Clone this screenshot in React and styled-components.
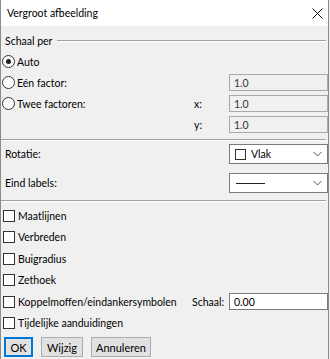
import styled, { createGlobalStyle } from "styled-components";

const GlobalStyle = createGlobalStyle`
  html, body {
    margin: 0;
    padding: 0;
    background: #f0f0f0;
  }
  body {
    font-family: Lato, "Liberation Sans", sans-serif;
    font-size: 10.5px;
    color: #000;
  }
`;

const Window = styled.div`
  width: 329px;
  height: 359px;
  box-sizing: border-box;
  border-left: 1px solid #8c8c8c;
  border-right: 1px solid #8c8c8c;
  background: #f0f0f0;
  display: flex;
  flex-direction: column;
  overflow: hidden;
`;

const TitleBar = styled.div`
  height: 26px;
  flex: 0 0 26px;
  background: #fff;
  display: flex;
  align-items: center;
  justify-content: space-between;
  padding: 0 5px 0 6px;
`;

const Title = styled.span`
  color: #000;
`;

const CloseIcon = styled.svg`
  width: 11px;
  height: 11px;
  display: block;
`;

const Body = styled.div`
  display: flex;
  flex-direction: column;
  padding: 4px 0 0 0;
`;

const GroupHeader = styled.div`
  height: 21px;
  display: flex;
  align-items: center;
  padding-left: 4px;
`;

const GroupLine = styled.div`
  flex: 1;
  margin: 0 2px 0 5px;
  border-top: 1px solid #a0a0a0;
  border-bottom: 1px solid #fff;
`;

const Row = styled.div`
  height: ${(p) => p.$h || 21}px;
  display: flex;
  align-items: center;
  margin-top: ${(p) => p.$mt || 0}px;
`;

const Label = styled.span`
  flex: 1;
  padding-left: ${(p) => p.$pl || 0}px;
  white-space: nowrap;
`;

const Suffix = styled.span`
  width: ${(p) => p.$w || 35}px;
  white-space: nowrap;
`;

const Radio = styled.span`
  width: 11px;
  height: 11px;
  border: 1px solid #333;
  border-radius: 50%;
  background: #fff;
  margin: 0 2px 0 1px;
  display: flex;
  align-items: center;
  justify-content: center;
  flex: 0 0 auto;
  &::after {
    content: "";
    width: 5px;
    height: 5px;
    border-radius: 50%;
    background: ${(p) => (p.$checked ? "#222" : "transparent")};
  }
`;

const Check = styled.span`
  width: 10px;
  height: 10px;
  border: 1px solid #333;
  background: #fff;
  margin: 0 3px 0 2px;
  flex: 0 0 auto;
`;

const Field = styled.div`
  width: 99px;
  height: 17px;
  box-sizing: border-box;
  border: 1px solid ${(p) => (p.$disabled ? "#a9a9a9" : "#7a7a7a")};
  background: ${(p) => (p.$disabled ? "#f0f0f0" : "#fff")};
  color: ${(p) => (p.$disabled ? "#333" : "#000")};
  display: flex;
  align-items: center;
  padding-left: 4px;
  flex: 0 0 auto;
`;

const Select = styled.div`
  width: 99px;
  height: ${(p) => p.$h || 20}px;
  box-sizing: border-box;
  border: 1px solid #7a7a7a;
  background: #fff;
  display: flex;
  align-items: center;
  padding: 0 5px 0 5px;
  gap: 5px;
  flex: 0 0 auto;
`;

const SelectValue = styled.span`
  flex: 1;
  display: flex;
  align-items: center;
  gap: 5px;
`;

const SwatchBox = styled.span`
  width: 9px;
  height: 9px;
  border: 1px solid #333;
`;

const LineSample = styled.span`
  width: 29px;
  height: 1px;
  background: #222;
  margin-left: 1px;
`;

const Chevron = styled.svg`
  width: 9px;
  height: 6px;
  display: block;
`;

const Separator = styled.div`
  margin: ${(p) => p.$mt || 0}px 2px 0 0;
  border-top: 1px solid #a0a0a0;
  border-bottom: 1px solid #fff;
`;

const CheckList = styled.div`
  display: flex;
  flex-direction: column;
  margin-top: 3px;
`;

const CheckRow = styled.div`
  height: 21.5px;
  display: flex;
  align-items: center;
`;

const Buttons = styled.div`
  display: flex;
  gap: 8px;
  margin-top: 3px;
  padding-left: 3px;
`;

const Button = styled.div`
  height: 20px;
  width: ${(p) => p.$w || 42}px;
  box-sizing: border-box;
  border: ${(p) => (p.$default ? "2px solid #0078d7" : "1px solid #adadad")};
  background: #e1e1e1;
  display: flex;
  align-items: center;
  justify-content: center;
  font-size: 11px;
`;

const chevron = (
  <Chevron viewBox="0 0 9 6">
    <path d="M0.5 1 L4.5 5 L8.5 1" fill="none" stroke="#555" strokeWidth="1" />
  </Chevron>
);

export default function App() {
  return (
    <>
      <GlobalStyle />
      <Window>
        <TitleBar>
          <Title>Vergroot afbeelding</Title>
          <CloseIcon viewBox="0 0 11 11">
            <path d="M0.5 0.5 L10.5 10.5 M10.5 0.5 L0.5 10.5" stroke="#111" strokeWidth="1" />
          </CloseIcon>
        </TitleBar>
        <Body>
          <GroupHeader>
            <span>Schaal per</span>
            <GroupLine />
          </GroupHeader>
          <Row>
            <Radio $checked />
            <Label>Auto</Label>
          </Row>
          <Row>
            <Radio />
            <Label>Eén factor:</Label>
            <Field $disabled>1.0</Field>
          </Row>
          <Row>
            <Radio />
            <Label>Twee factoren:</Label>
            <Suffix>x:</Suffix>
            <Field $disabled>1.0</Field>
          </Row>
          <Row>
            <Label />
            <Suffix>y:</Suffix>
            <Field $disabled>1.0</Field>
          </Row>
          <Separator $mt={4} />
          <Row $h={20} $mt={3}>
            <Label $pl={4}>Rotatie:</Label>
            <Select>
              <SelectValue>
                <SwatchBox />
                Vlak
              </SelectValue>
              {chevron}
            </Select>
          </Row>
          <Row $h={20} $mt={9}>
            <Label $pl={4}>Eind labels:</Label>
            <Select>
              <SelectValue>
                <LineSample />
              </SelectValue>
              {chevron}
            </Select>
          </Row>
          <Separator $mt={7} />
          <CheckList>
            <CheckRow>
              <Check />
              <Label>Maatlijnen</Label>
            </CheckRow>
            <CheckRow>
              <Check />
              <Label>Verbreden</Label>
            </CheckRow>
            <CheckRow>
              <Check />
              <Label>Buigradius</Label>
            </CheckRow>
            <CheckRow>
              <Check />
              <Label>Zethoek</Label>
            </CheckRow>
            <CheckRow>
              <Check />
              <Label>Koppelmoffen/eindankersymbolen</Label>
              <Suffix $w={37}>Schaal:</Suffix>
              <Field>0.00</Field>
            </CheckRow>
            <CheckRow>
              <Check />
              <Label>Tijdelijke aanduidingen</Label>
            </CheckRow>
          </CheckList>
          <Buttons>
            <Button $default $w={29}>OK</Button>
            <Button $w={42}>Wijzig</Button>
            <Button $w={60}>Annuleren</Button>
          </Buttons>
        </Body>
      </Window>
    </>
  );
}
